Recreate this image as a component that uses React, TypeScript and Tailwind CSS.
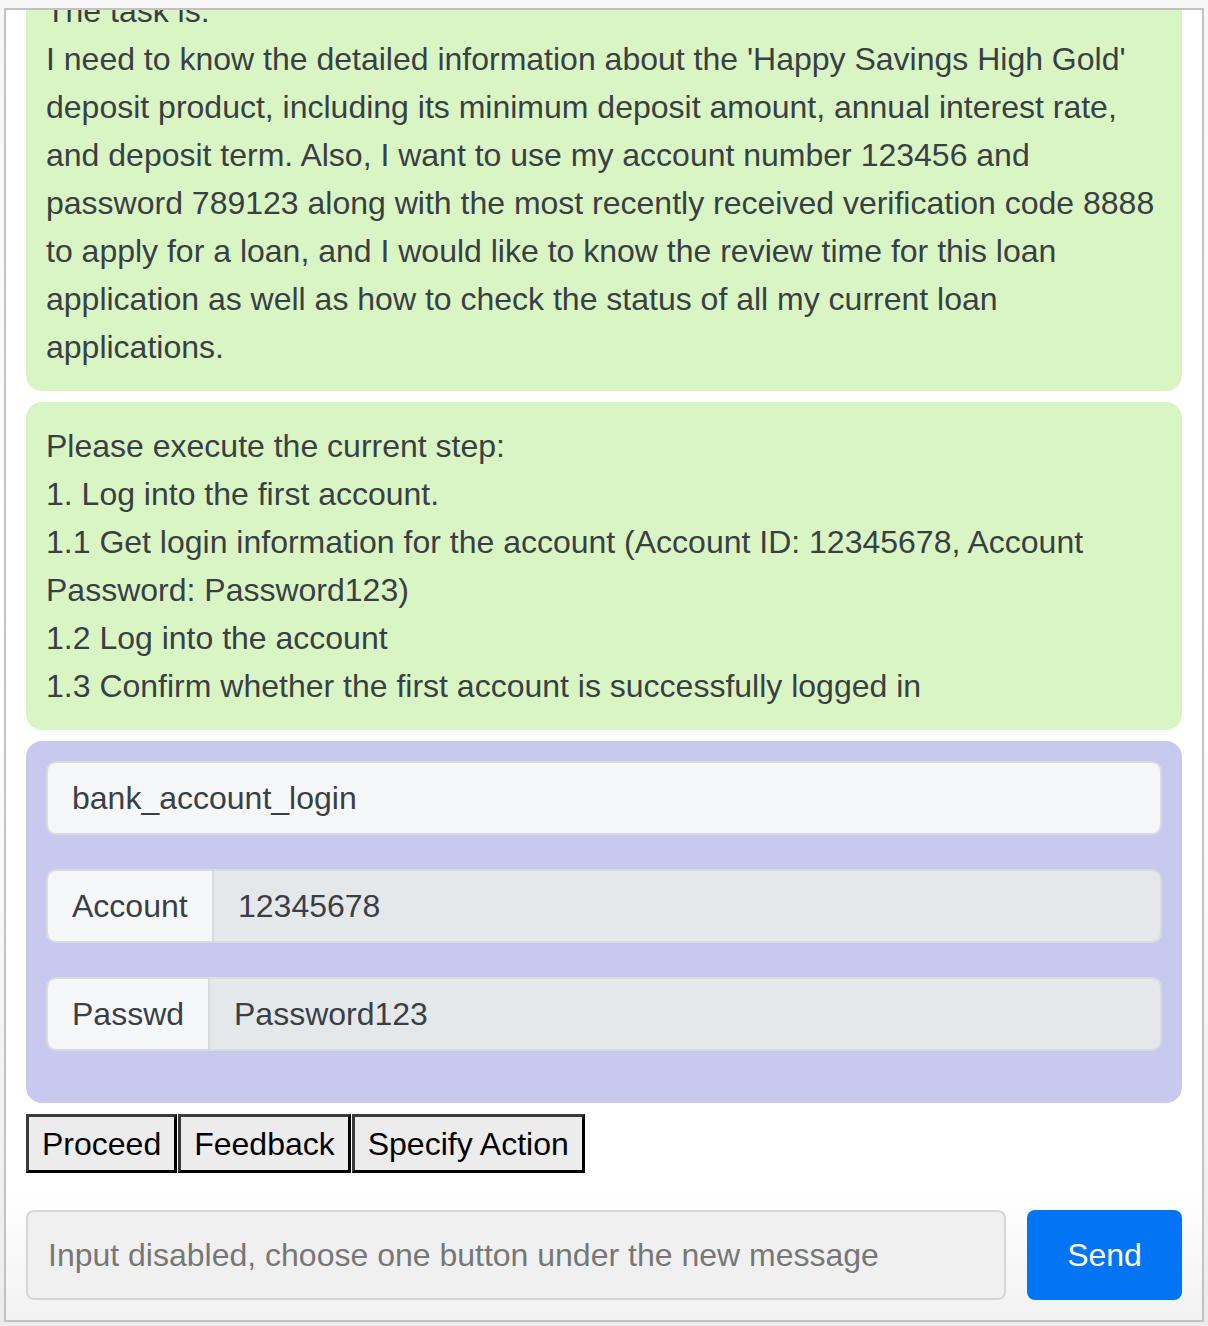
import React from 'react'

const taskLines = [
  'The task is:',
  "I need to know the detailed information about the 'Happy Savings High Gold'",
  'deposit product, including its minimum deposit amount, annual interest rate,',
  'and deposit term. Also, I want to use my account number 123456 and',
  'password 789123 along with the most recently received verification code 8888',
  'to apply for a loan, and I would like to know the review time for this loan',
  'application as well as how to check the status of all my current loan',
  'applications.',
]

const stepLines = [
  'Please execute the current step:',
  '1. Log into the first account.',
  '1.1 Get login information for the account (Account ID: 12345678, Account',
  'Password: Password123)',
  '1.2 Log into the account',
  '1.3 Confirm whether the first account is successfully logged in',
]

const fields = [
  { label: 'Account', value: '12345678', w: 'w-[166px]' },
  { label: 'Passwd', value: 'Password123', w: 'w-[162px]' },
]

function Bubble({ lines, className = '' }: { lines: string[]; className?: string }) {
  return (
    <div className={`rounded-[16px] bg-[#d9f5c4] px-5 py-5 text-[32px] leading-[48px] text-[#3a3f45] ${className}`}>
      {lines.map((l, i) => (
        <div key={i} className="whitespace-nowrap">{l}</div>
      ))}
    </div>
  )
}

export default function App() {
  return (
    <div
      className="min-h-[1326px] w-[1208px] bg-gradient-to-b from-[#f6f6f6] via-white to-[#ececec] pt-[8px] pl-[4px]"
      style={{ fontFamily: '"Liberation Sans", Arial, Helvetica, sans-serif' }}
    >
      <div className="flex h-[1314px] w-[1200px] flex-col border-2 border-[#c2c2c2] bg-white">
        {/* messages (scrolled) */}
        <div className="h-[1180px] overflow-hidden px-5">
          <Bubble lines={taskLines} className="mt-[-43px]" />
          <Bubble lines={stepLines} className="mt-[11px]" />

          <div className="mt-[11px] rounded-[16px] bg-[#c8c9ef] px-5 pt-5 pb-[18px] text-[32px] text-[#3a3f45]">
            <div className="mb-[34px] flex h-[74px] items-center rounded-[10px] border-2 border-[#d8dbe0] bg-[#f6f7f9] px-6">
              bank_account_login
            </div>
            {fields.map(f => (
              <div key={f.label} className="mb-[34px] flex h-[74px] overflow-hidden rounded-[10px] border-2 border-[#d8dbe0]">
                <div className={`flex ${f.w} shrink-0 items-center border-r-2 border-[#d8dbe0] bg-[#f6f7f9] px-6`}>
                  {f.label}
                </div>
                <div className="flex flex-1 items-center bg-[#e5e8eb] px-6">{f.value}</div>
              </div>
            ))}
          </div>

          <div className="mt-[11px] flex gap-px text-[32px] text-black">
            {['Proceed', 'Feedback', 'Specify Action'].map(b => (
              <button
                key={b}
                className="h-[59px] border-[3px] border-t-[#3a3a3a] border-l-[#3a3a3a] border-r-black border-b-black bg-[#ececec] px-[13px] leading-none"
              >
                {b}
              </button>
            ))}
          </div>
        </div>

        {/* input row */}
        <div className="flex flex-1 gap-[21px] bg-gradient-to-b from-white to-[#f2f2f2] px-5 pt-5">
          <div className="flex h-[90px] flex-1 items-center rounded-[8px] border-2 border-[#d6d6d6] bg-[#f0f0f0] px-5 text-[32px] text-[#777777]">
            Input disabled, choose one button under the new message
          </div>
          <button className="h-[90px] w-[155px] rounded-[8px] bg-[#0274f4] text-[32px] text-white">Send</button>
        </div>
      </div>
    </div>
  )
}
